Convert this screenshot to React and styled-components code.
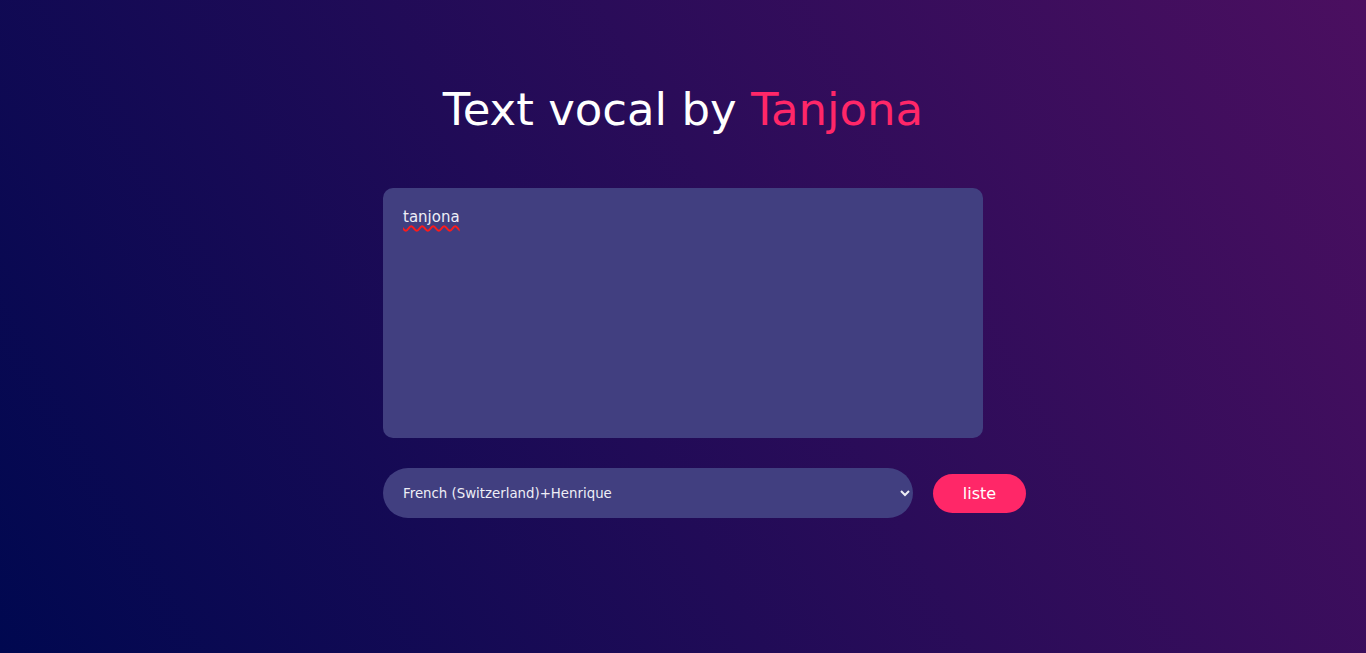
import React, { useState } from 'react'
import styled, { createGlobalStyle } from 'styled-components'

const GlobalStyle = createGlobalStyle`
  html, body {
    margin: 0;
    padding: 0;
  }
  body {
    font-family: "DejaVu Sans", sans-serif;
    background: #1a0a58;
  }
`

const Page = styled.main`
  min-height: 100vh;
  box-sizing: border-box;
  background: linear-gradient(60deg, #000850 0%, #4b0f60 100%);
  display: flex;
  flex-direction: column;
  align-items: center;
  padding-top: 83px;
`

const Title = styled.h1`
  margin: 0 0 52px;
  font-size: 45px;
  font-weight: 400;
  line-height: normal;
  color: #ffffff;
`

const Accent = styled.span`
  color: #ff2768;
`

const Form = styled.div`
  width: 600px;
  display: flex;
  flex-direction: column;
  gap: 30px;
`

const TextBox = styled.div`
  box-sizing: border-box;
  height: 250px;
  padding: 20px;
  border-radius: 10px;
  background: #413f80;
  color: #eeeef6;
  font-size: 15px;
  line-height: normal;
  outline: none;
  white-space: pre-wrap;
`

const Misspelled = styled.span`
  text-decoration: underline wavy #ff1a1a;
  text-decoration-thickness: 1.5px;
  text-underline-offset: 3px;
`

const Controls = styled.div`
  display: flex;
  align-items: center;
  gap: 20px;
`

const VoiceSelect = styled.select`
  flex: 0 0 530px;
  width: 530px;
  height: 50px;
  padding: 0 5px 0 16px;
  border: none;
  border-radius: 25px;
  background: #413f80;
  color: #eeeef6;
  font-family: "DejaVu Sans", sans-serif;
  font-size: 13.33px;
  outline: none;
`

const ListButton = styled.button`
  flex: 0 0 93px;
  width: 93px;
  height: 39px;
  border: none;
  border-radius: 20px;
  background: #ff2768;
  color: #ffffff;
  font-family: "DejaVu Sans", sans-serif;
  font-size: 16px;
  cursor: pointer;
`

const voices = [
  'French (Switzerland)+Henrique',
  'French (France)+Henrique',
  'English (America)+Henrique',
]

export default function App() {
  const [voice, setVoice] = useState(voices[0])

  return (
    <>
      <GlobalStyle />
      <Page>
        <Title>
          Text vocal by <Accent>Tanjona</Accent>
        </Title>
        <Form>
          <TextBox contentEditable suppressContentEditableWarning role="textbox">
            <Misspelled>tanjona</Misspelled>
          </TextBox>
          <Controls>
            <VoiceSelect value={voice} onChange={(e) => setVoice(e.target.value)}>
              {voices.map((v) => (
                <option key={v} value={v}>{v}</option>
              ))}
            </VoiceSelect>
            <ListButton>liste</ListButton>
          </Controls>
        </Form>
      </Page>
    </>
  )
}
